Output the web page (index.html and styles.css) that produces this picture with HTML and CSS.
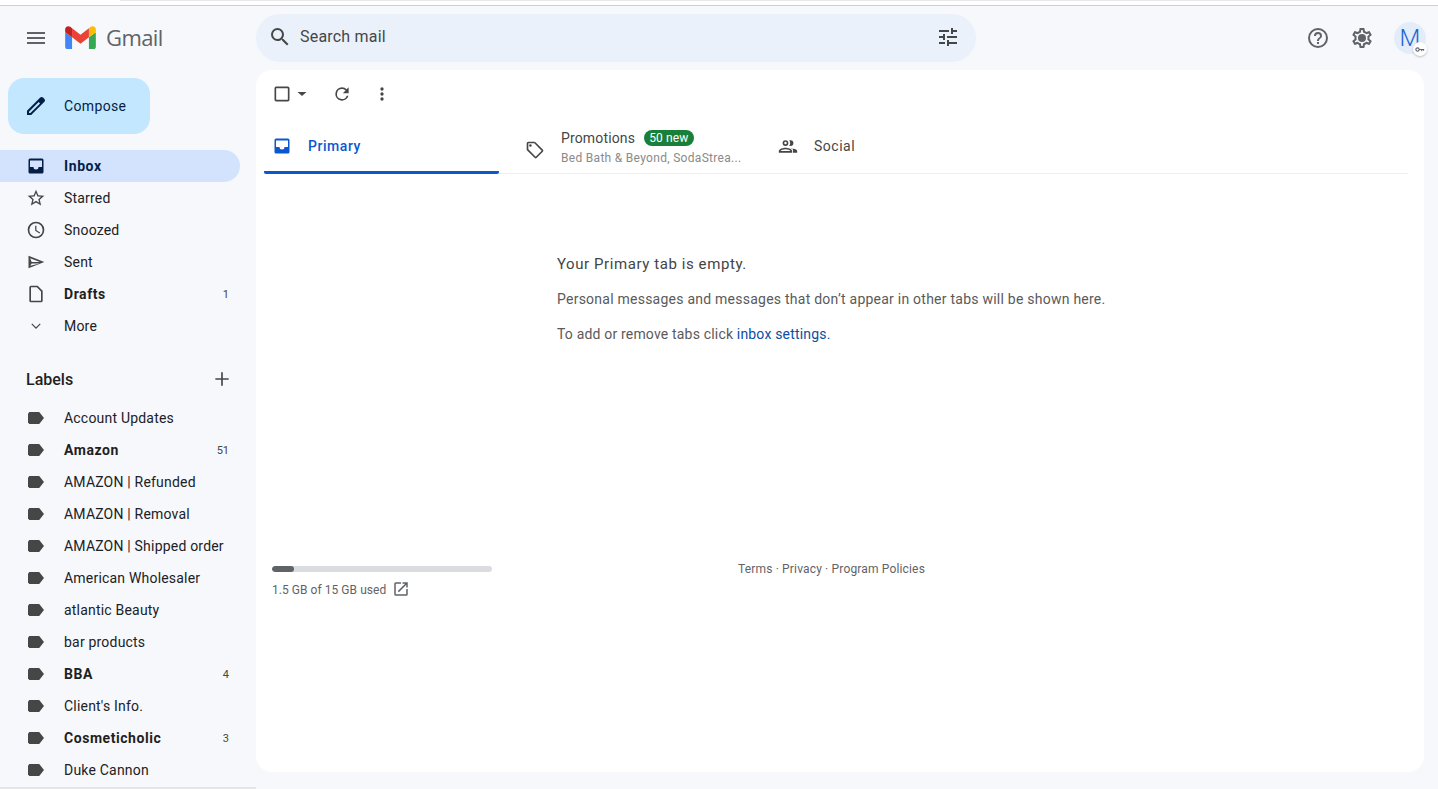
FILE: index.html
```html
<!DOCTYPE html>
<html lang="en">
<head>
<meta charset="utf-8">
<title>Gmail</title>
<link rel="stylesheet" href="styles.css">
</head>
<body>
<div class="app">
  <div class="topline"><div class="topline-seg"></div></div>
  <header class="header">
    <div class="brand">
      <button class="menu" aria-label="Menu"><svg width="24" height="24" viewBox="0 0 24 24"><path fill="#5f6368" d="M3 18h18v-2H3v2zm0-5h18v-2H3v2zm0-7v2h18V6H3z"/></svg></button>
      <svg class="logo" width="32" height="24" viewBox="0 0 32 24">
        <path fill="#4285f4" d="M2.2 24h5V11.8L0 6.4v15.4C0 23 1 24 2.2 24z"/>
        <path fill="#34a853" d="M24.8 24h5c1.2 0 2.2-1 2.2-2.2V6.4l-7.200 5.400z"/>
        <path fill="#fbbc04" d="M24.800 2.400v9.400L32 6.400V3.500c0-2.700-3.100-4.200-5.300-2.600z"/>
        <path fill="#ea4335" d="M7.200 11.800V2.400L16 9l8.800-6.600v9.400L16 18.400z"/>
        <path fill="#c5221f" d="M0 3.500v2.900l7.200 5.400V2.400l-1.900-1.500C3.100-.7 0 .8 0 3.500z"/>
      </svg>
      <span class="wordmark">Gmail</span>
    </div>
    <div class="search">
      <svg width="24" height="24" viewBox="0 0 24 24"><path fill="#444746" d="M15.500 14h-.79l-.28-.27A6.471 6.471 0 0 0 16 9.500 6.500 6.500 0 1 0 9.500 16c1.610 0 3.090-.59 4.230-1.570l.27.280v.79l5 4.990L20.490 19l-4.990-5zm-6 0C7.010 14 5 11.990 5 9.500S7.010 5 9.500 5 14 7.010 14 9.500 11.990 14 9.500 14z"/></svg>
      <span class="search-text">Search mail</span>
      <svg class="tune" width="24" height="24" viewBox="0 0 24 24"><path fill="#444746" d="M3 17v2h6v-2H3zM3 5v2h10V5H3zm10 16v-2h8v-2h-8v-2h-2v6h2zM7 9v2H3v2h4v2h2V9H7zm14 4v-2H11v2h10zm-6-4h2V7h4V5h-4V3h-2v6z"/></svg>
    </div>
    <div class="actions">
      <svg width="24" height="24" viewBox="0 0 24 24"><path fill="#5f6368" d="M11 18h2v-2h-2v2zm1-16a10 10 0 1 0 0 20 10 10 0 0 0 0-20zm0 18a8 8 0 1 1 0-16 8 8 0 0 1 0 16zm0-14a4 4 0 0 0-4 4h2a2 2 0 1 1 4 0c0 2-3 1.750-3 5h2c0-2.250 3-2.500 3-5a4 4 0 0 0-4-4z"/></svg>
      <svg width="24" height="24" viewBox="0 0 24 24"><path fill="#5f6368" d="M19.430 12.980c.04-.32.070-.64.070-.98s-.03-.66-.07-.98l2.110-1.650c.19-.15.240-.42.120-.64l-2-3.460c-.12-.22-.39-.3-.61-.22l-2.490 1c-.52-.4-1.080-.73-1.690-.98l-.38-2.650A.49.490 0 0 0 14 2h-4c-.25 0-.46.180-.49.420l-.38 2.650c-.61.250-1.170.59-1.690.98l-2.490-1a.5.500 0 0 0-.61.220l-2 3.460c-.13.220-.07.490.12.640l2.110 1.650c-.04.320-.07.650-.07.980s.03.660.07.980l-2.110 1.650c-.19.150-.24.420-.12.640l2 3.460c.12.220.39.300.61.220l2.490-1c.52.400 1.080.730 1.690.980l.38 2.650c.03.240.24.420.49.420h4c.25 0 .46-.18.49-.42l.38-2.650c.61-.25 1.170-.59 1.690-.98l2.490 1c.23.090.49 0 .61-.22l2-3.460c.12-.22.07-.49-.12-.64l-2.110-1.650zM17.450 11.270c.04.310.05.520.05.730s-.02.430-.05.730l-.14 1.130.89.700 1.080.840-.7 1.210-1.270-.51-1.040-.42-.9.680c-.43.320-.84.560-1.250.730l-1.060.430-.16 1.130-.2 1.350h-1.400l-.19-1.350-.16-1.130-1.060-.43c-.43-.18-.83-.41-1.230-.71l-.91-.7-1.060.43-1.270.51-.7-1.210 1.080-.84.890-.7-.14-1.130c-.03-.31-.05-.54-.05-.74s.02-.43.050-.73l.14-1.130-.89-.7-1.080-.84.7-1.210 1.270.51 1.040.42.9-.68c.43-.32.840-.56 1.250-.73l1.060-.43.16-1.130.2-1.350h1.390l.19 1.350.16 1.130 1.060.43c.43.180.83.410 1.230.71l.91.700 1.060-.43 1.270-.51.7 1.210-1.070.85-.89.700.14 1.130zM12 8a4 4 0 1 0 0 8 4 4 0 0 0 0-8z"/></svg>
      <div class="avatar">M<span class="key"><svg width="10" height="7" viewBox="0 0 12 8"><circle cx="3" cy="4" r="2" fill="none" stroke="#5f6368" stroke-width="1.300"/><path stroke="#5f6368" stroke-width="1.300" d="M5 4h6M8 4v2M10.300 4v1.500"/></svg></span></div>
    </div>
  </header>
  <div class="body">
    <aside class="sidebar">
      <button class="compose"><svg width="24" height="24" viewBox="0 0 24 24"><path fill="#041e49" d="M20.410 4.940l-1.350-1.350c-.78-.78-2.050-.78-2.830 0L3 16.820V21h4.180L20.410 7.770c.79-.78.790-2.050 0-2.830zm-14 14.120L5 19v-1.360l9.660-9.660 1.410 1.410-9.660 9.670z"/></svg><span>Compose</span></button>
      <nav class="nav">
        <a class="row active"><svg width="20" height="20" viewBox="0 0 20 20"><path fill="#041e49" d="M4 2.500h12A1.500 1.500 0 0 1 17.500 4v12a1.500 1.500 0 0 1-1.500 1.500H4A1.500 1.500 0 0 1 2.500 16V4A1.500 1.500 0 0 1 4 2.500zm0 2V11h3.500a2.500 2.500 0 0 0 5 0H16V4.500z" fill-rule="evenodd"/></svg><span>Inbox</span></a>
        <a class="row"><svg width="20" height="20" viewBox="0 0 24 24"><path fill="#444746" d="M22 9.240l-7.190-.62L12 2 9.190 8.630 2 9.240l5.460 4.730L5.820 21 12 17.270 18.180 21l-1.630-7.030L22 9.240zM12 15.400l-3.760 2.270 1-4.280-3.320-2.880 4.380-.38L12 6.100l1.710 4.040 4.380.38-3.320 2.880 1 4.280L12 15.400z"/></svg><span>Starred</span></a>
        <a class="row"><svg width="20" height="20" viewBox="0 0 24 24"><path fill="#444746" d="M12 2a10 10 0 1 0 0 20 10 10 0 0 0 0-20zm0 18a8 8 0 1 1 0-16 8 8 0 0 1 0 16zm.5-13H11v6l5.200 3.200.8-1.300-4.500-2.700V7z"/></svg><span>Snoozed</span></a>
        <a class="row"><svg width="20" height="20" viewBox="0 0 24 24"><path fill="#444746" d="M3 4.500v15L22 12 3 4.500zm2 3l11.600 4.500H6.800L5 7.500zm0 9l1.800-2.800h9.800L5 16.500z"/></svg><span>Sent</span></a>
        <a class="row unread"><svg width="20" height="20" viewBox="0 0 24 24"><path fill="#444746" d="M14 2H6a2 2 0 0 0-2 2v16a2 2 0 0 0 2 2h12a2 2 0 0 0 2-2V8l-6-6zm4 18H6V4h7l5 5v11z"/></svg><span>Drafts</span><em class="count">1</em></a>
        <a class="row"><svg width="20" height="20" viewBox="0 0 24 24"><path fill="#444746" d="M7.400 9L12 13.600 16.600 9l1 1-5.600 5.600L6.400 10z"/></svg><span>More</span></a>
      </nav>
      <div class="labels-head"><span>Labels</span><svg width="20" height="20" viewBox="0 0 24 24"><path fill="#444746" d="M20 13h-7v7h-2v-7H4v-2h7V4h2v7h7v2z"/></svg></div>
      <nav class="labels">
        <a class="row"><i class="tag"></i><span>Account Updates</span></a>
        <a class="row unread"><i class="tag"></i><span>Amazon</span><em class="count">51</em></a>
        <a class="row"><i class="tag"></i><span>AMAZON | Refunded</span></a>
        <a class="row"><i class="tag"></i><span>AMAZON | Removal</span></a>
        <a class="row"><i class="tag"></i><span>AMAZON | Shipped order</span></a>
        <a class="row"><i class="tag"></i><span>American Wholesaler</span></a>
        <a class="row"><i class="tag"></i><span>atlantic Beauty</span></a>
        <a class="row"><i class="tag"></i><span>bar products</span></a>
        <a class="row unread"><i class="tag"></i><span>BBA</span><em class="count">4</em></a>
        <a class="row"><i class="tag"></i><span>Client's Info.</span></a>
        <a class="row unread"><i class="tag"></i><span>Cosmeticholic</span><em class="count">3</em></a>
        <a class="row"><i class="tag"></i><span>Duke Cannon</span></a>
      </nav>
    </aside>
    <main class="card">
      <div class="toolbar">
        <svg class="check" width="20" height="20" viewBox="0 0 24 24"><path fill="#444746" d="M19 5v14H5V5h14m0-2H5a2 2 0 0 0-2 2v14a2 2 0 0 0 2 2h14a2 2 0 0 0 2-2V5a2 2 0 0 0-2-2z"/></svg>
        <svg class="caret" width="20" height="20" viewBox="0 0 20 20"><path fill="#444746" d="M5.500 8h9L10 12z"/></svg>
        <svg class="refresh" width="20" height="20" viewBox="0 0 24 24"><path fill="#444746" d="M17.650 6.350A7.960 7.960 0 0 0 12 4a8 8 0 1 0 7.730 10h-2.080A6 6 0 1 1 12 6c1.660 0 3.140.690 4.220 1.780L13 11h7V4l-2.350 2.350z"/></svg>
        <svg class="dots" width="20" height="20" viewBox="0 0 24 24"><path fill="#444746" d="M12 8a2 2 0 1 0 0-4 2 2 0 0 0 0 4zm0 2a2 2 0 1 0 0 4 2 2 0 0 0 0-4zm0 6a2 2 0 1 0 0 4 2 2 0 0 0 0-4z"/></svg>
      </div>
      <div class="tabs">
        <div class="tab primary"><svg width="20" height="20" viewBox="0 0 20 20"><path fill="#0b57d0" d="M4 2.500h12A1.500 1.500 0 0 1 17.500 4v12a1.500 1.500 0 0 1-1.500 1.500H4A1.500 1.500 0 0 1 2.500 16V4A1.500 1.500 0 0 1 4 2.500zm0 2V11h3.500a2.500 2.500 0 0 0 5 0H16V4.500z" fill-rule="evenodd"/></svg><span>Primary</span></div>
        <div class="tab promotions"><svg width="20" height="20" viewBox="0 0 24 24"><path fill="#444746" d="M21.410 11.410l-8.830-8.830A2 2 0 0 0 11.170 2H4a2 2 0 0 0-2 2v7.170c0 .53.210 1.040.59 1.410l8.830 8.830a2 2 0 0 0 2.830 0l7.170-7.170a2 2 0 0 0 0-2.830h-.01zM12.830 20L4 11.170V4h7.170L20 12.830 12.830 20z"/><circle fill="#444746" cx="6.500" cy="6.500" r="1.500"/></svg>
          <div class="tab-text">
            <div class="tab-title"><span>Promotions</span><b class="badge">50 new</b></div>
            <div class="tab-sub">Bed Bath &amp; Beyond, SodaStrea...</div>
          </div>
        </div>
        <div class="tab social"><svg width="20" height="20" viewBox="0 0 24 24"><path fill="#444746" d="M9 12a3.500 3.500 0 1 0 0-7 3.500 3.500 0 0 0 0 7zm0-5a1.500 1.500 0 1 1 0 3 1.500 1.500 0 0 1 0-3zm0 7c-2.670 0-8 1.340-8 4v2h16v-2c0-2.660-5.330-4-8-4zm-6 4c.2-.7 3.300-2 6-2s5.800 1.300 6 2H3zm13.040-3.940c1.160.84 1.960 1.960 1.960 3.440V20h5v-2c0-2-3.500-3.100-6.960-2.940zM15 12a3.500 3.500 0 0 0 0-7c-.54 0-1.040.13-1.500.35a5.400 5.400 0 0 1 0 6.300c.46.220.96.350 1.500.350z"/></svg><span>Social</span></div>
      </div>
      <section class="empty">
        <h2>Your Primary tab is empty.</h2>
        <p>Personal messages and messages that don’t appear in other tabs will be shown here.</p>
        <p class="hint">To add or remove tabs click <a class="link">inbox settings.</a></p>
      </section>
      <footer class="foot">
        <div class="storage">
          <div class="bar"><div class="bar-fill"></div></div>
          <div class="used"><span>1.5 GB of 15 GB used</span><svg width="18" height="18" viewBox="0 0 24 24"><path fill="#5f6368" d="M19 19H5V5h7V3H5a2 2 0 0 0-2 2v14a2 2 0 0 0 2 2h14a2 2 0 0 0 2-2v-7h-2v7zM14 3v2h3.590l-9.830 9.830 1.410 1.410L19 6.410V10h2V3h-7z"/></svg></div>
        </div>
        <div class="terms">Terms · Privacy · Program Policies</div>
      </footer>
    </main>
  </div>
</div>
</body>
</html>
```
FILE: styles.css
```css
* { box-sizing: border-box; }
html, body { margin: 0; height: 100%; overflow: hidden; }
body { font-family: Roboto, "Liberation Sans", sans-serif; font-size: 14px; color: #1f1f1f; background: #f6f8fc; }
.app { height: 789px; display: flex; flex-direction: column; overflow: hidden; }
.topline { height: 6px; background: #fff; border-bottom: 1px solid #cfcfcf; flex: none; padding-left: 120px; }
.topline-seg { width: 1200px; height: 1px; background: #e8e8e8; }
.header { height: 64px; flex: none; display: flex; align-items: center; }
.brand { width: 256px; flex: none; display: flex; align-items: center; padding-left: 24px; }
.menu { width: 24px; height: 24px; padding: 0; border: 0; background: none; margin-right: 17px; }
.logo { display: block; width: 31px; height: 23px; margin-bottom: 2px; }
.wordmark { font-family: "Open Sans", Roboto, sans-serif; font-size: 22px; color: #5f6368; margin-left: 10px; margin-bottom: 2px; letter-spacing: -0.6px; }
.search { width: 720px; height: 48px; border-radius: 24px; background: #eaf1fb; display: flex; align-items: center; padding: 0 16px 2px 12px; }
.search-text { font-size: 16px; color: #444746; margin-left: 8px; flex: 1; padding-bottom: 2px; letter-spacing: .2px; }
.actions { flex: 1; display: flex; align-items: center; justify-content: flex-end; gap: 20px; padding-right: 12px; }
.avatar { position: relative; width: 32px; height: 32px; border-radius: 50%; background: #e3ecf9; color: #1a66d6; font-size: 24px; font-weight: 300; line-height: 33px; text-align: center; }
.key { position: absolute; right: -1px; bottom: -2px; width: 14px; height: 14px; border-radius: 50%; background: #fff; display: flex; align-items: center; justify-content: center; box-shadow: 0 1px 2px rgba(60,64,67,.3); }
.body { flex: 1; display: flex; min-height: 0; }
.sidebar { width: 256px; flex: none; overflow: hidden; border-bottom: 2px solid #e6e6e6; }
.compose { display: flex; align-items: center; width: 142px; height: 56px; margin: 8px 0 16px 8px; padding: 0 0 0 16px; border: 0; border-radius: 16px; background: #c2e7ff; font: 400 14px Roboto, sans-serif; letter-spacing: .35px; color: #041e49; }
.compose span { margin-left: 16px; }
.nav, .labels { display: flex; flex-direction: column; width: 240px; }
.row { height: 32px; display: flex; align-items: center; padding: 0 11px 0 26px; border-radius: 0 16px 16px 0; color: #202124; letter-spacing: .2px; }
.row > span { margin-left: 18px; flex: 1; white-space: nowrap; }
.row svg { flex: none; }
.row.active { background: #d3e3fd; color: #041e49; font-weight: 700; letter-spacing: .6px; }
.row.unread { font-weight: 700; color: #1f1f1f; letter-spacing: .55px; }
.count { font-style: normal; font-weight: 400; font-size: 11px; color: #444746; letter-spacing: 0; }
.labels-head { display: flex; align-items: center; justify-content: space-between; width: 240px; height: 40px; margin-top: 17px; padding: 0 8px 0 26px; font-size: 16px; font-weight: 500; }
.labels-head svg { display: block; }
.labels { margin-top: 3px; }
.labels .row > span { margin-left: 20px; }
.tag { flex: none; width: 16px; height: 12px; margin-left: 2px; background: #444746; clip-path: polygon(8% 0, 70% 0, 100% 50%, 70% 100%, 8% 100%, 0 85%, 0 15%); }
.card { width: 1168px; height: 702px; background: #fff; border-radius: 16px; display: flex; flex-direction: column; }
.toolbar { height: 48px; display: flex; align-items: center; padding-left: 16px; flex: none; }
.toolbar svg { display: block; flex: none; }
.refresh { margin-left: 20px; }
.dots { margin-left: 20px; }
.tabs { margin: 8px 16px 0 8px; height: 48px; display: flex; border-bottom: 1px solid #eceff1; flex: none; }
.tab { display: flex; align-items: center; height: 48px; color: #444746; flex: none; padding-bottom: 8px; }
.tab.primary { width: 235px; padding: 0 0 5px 8px; color: #0b57d0; font-weight: 500; letter-spacing: .55px; border-bottom: 3px solid #0b57d0; border-radius: 0 0 2px 2px; }
.tab.primary span { margin-left: 16px; }
.tab.promotions { width: 253px; padding: 0 0 0 26px; }
.tab-text { margin-left: 16px; margin-top: -7px; }
.tab-title { display: flex; align-items: center; gap: 9px; height: 18px; color: #444746; letter-spacing: .15px; }
.badge { height: 16px; padding: 0 5px; border-radius: 8px; background: #188038; color: #fff; font-size: 12px; font-weight: 400; line-height: 16px; letter-spacing: .15px; }
.tab-sub { margin-top: 4px; font-size: 12px; color: #8a8a8a; letter-spacing: .3px; white-space: nowrap; }
.tab.social { padding-left: 26px; }
.tab.social span { margin-left: 16px; letter-spacing: .5px; }
.empty { margin: 80px 0 0 301px; flex: none; color: #444746; }
.empty h2 { margin: 0; height: 20px; font-size: 15px; line-height: 20px; font-weight: 400; letter-spacing: .58px; color: #444; }
.empty p { margin: 16px 0 0; height: 19px; font-size: 14px; line-height: 19px; letter-spacing: .24px; color: #5a5a5a; }
.empty .hint { letter-spacing: .18px; }
.link { color: #0b4ea2; }
.foot { display: flex; margin: 222px 0 0 16px; }
.storage { width: 220px; }
.bar { height: 6px; border-radius: 3px; background: #dadce0; overflow: hidden; }
.bar-fill { width: 22px; height: 6px; border-radius: 3px; background: #5f6368; }
.used { display: flex; align-items: center; margin-top: 8px; height: 20px; font-size: 12px; color: #5f6368; letter-spacing: .05px; }
.used svg { margin-left: 6px; margin-top: -3px; }
.terms { margin: -5px 0 0 246px; font-size: 12px; line-height: 16px; color: #5f6368; letter-spacing: .16px; }
```
